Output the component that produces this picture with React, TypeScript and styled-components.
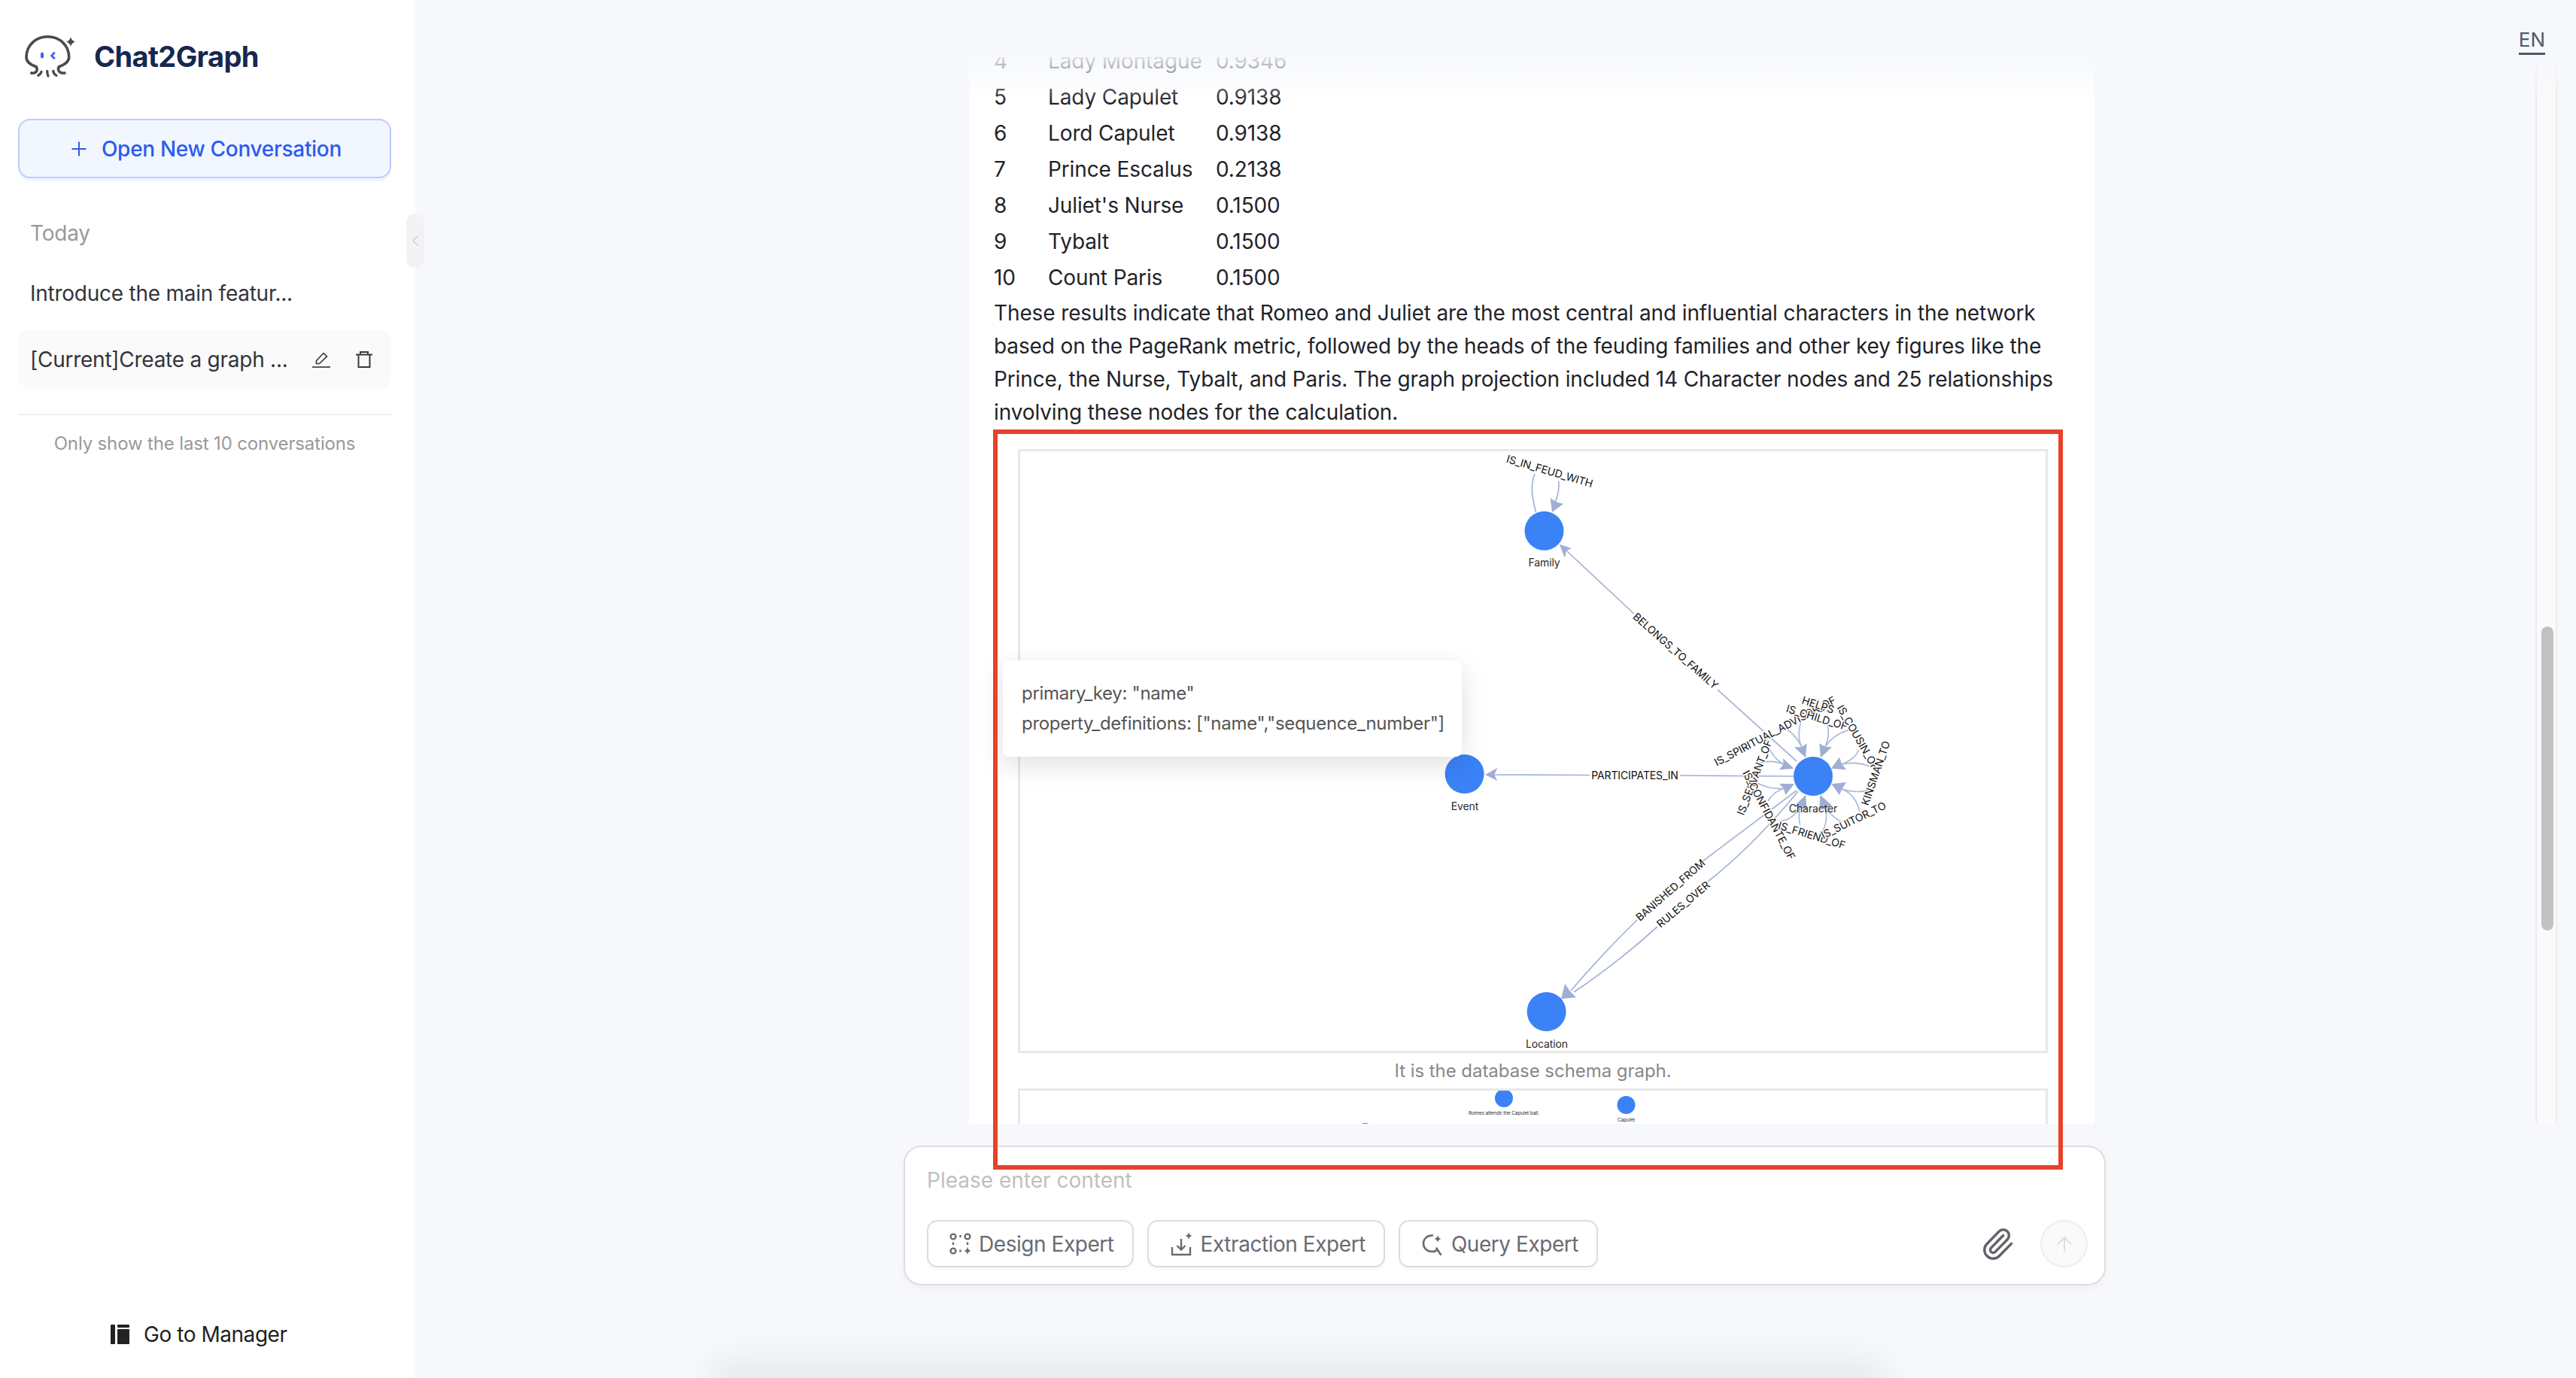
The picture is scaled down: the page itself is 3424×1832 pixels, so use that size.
import React from "react";
import styled, { createGlobalStyle } from "styled-components";
import { Plus, ChevronLeft, Paperclip, ArrowUp } from "lucide-react";

const Global = createGlobalStyle`
  html, body { margin: 0; padding: 0; background: #f6f8fc; }
  * { box-sizing: border-box; }
`;

const Page = styled.div`
  position: relative;
  display: flex;
  width: 3424px;
  height: 1832px;
  overflow: hidden;
  background: #f6f8fc;
  font-family: Inter, "Noto Sans", sans-serif;
`;

const Sidebar = styled.aside`
  position: relative;
  flex: 0 0 552px;
  display: flex;
  flex-direction: column;
  padding: 0 32px 38px 24px;
  background: #fff;
`;

const Brand = styled.div`
  display: flex;
  align-items: center;
  gap: 23px;
  height: 58px;
  margin: 46px 0 54px 6px;
`;

const BrandName = styled.span`
  font-size: 38px;
  font-weight: 700;
  color: #16284f;
  letter-spacing: -0.6px;
`;

const NewButton = styled.button`
  display: flex;
  align-items: center;
  justify-content: center;
  gap: 15px;
  width: 496px;
  height: 79px;
  border: 2px solid #bcccfb;
  border-radius: 16px;
  background: #f2f6ff;
  box-shadow: 0 4px 0 #f1f6ff;
  color: #2a5bf0;
  font: 500 28px Inter, sans-serif;
  letter-spacing: -0.3px;
`;

const SectionLabel = styled.div`
  margin: 53px 0 21px 16px;
  font-size: 28px;
  line-height: 40px;
  color: #999;
  letter-spacing: -0.2px;
`;

const Conversation = styled.div<{ $current?: boolean }>`
  display: flex;
  align-items: center;
  height: 78px;
  padding: 0 25px 0 16px;
  border-radius: 16px;
  background: ${(p) => (p.$current ? "#fafafa" : "transparent")};
  margin-bottom: 10px;
  font-size: 28px;
  letter-spacing: -0.25px;
  color: #33343a;
`;

const ConversationTitle = styled.span`
  flex: 1;
  white-space: nowrap;
`;

const ConversationActions = styled.span`
  display: flex;
  align-items: center;
  gap: 34px;
`;

const Divider = styled.hr`
  width: 100%;
  height: 2px;
  margin: 23px 0 0;
  border: 0;
  background: #f0f0f0;
`;

const Note = styled.div`
  margin-top: 22px;
  font-size: 24px;
  line-height: 32px;
  letter-spacing: -0.15px;
  text-align: center;
  color: #999;
`;

const ManagerLink = styled.div`
  display: flex;
  align-items: center;
  gap: 19px;
  height: 40px;
  margin-top: auto;
  padding-left: 123px;
  font-size: 28px;
  letter-spacing: -0.45px;
  color: #1f1f1f;
`;

const CollapseHandle = styled.div`
  position: absolute;
  left: 540px;
  top: 284px;
  display: flex;
  align-items: center;
  justify-content: center;
  width: 24px;
  height: 72px;
  border-radius: 12px;
  background: #f3f3f3;
  color: #c9c9c9;
`;

const Main = styled.main`
  position: relative;
  flex: 1;
  min-width: 0;
  display: flex;
  flex-direction: column;
`;

const TopBar = styled.header`
  display: flex;
  justify-content: flex-end;
  height: 76px;
  padding: 36px 41px 0 0;
`;

const LangSwitch = styled.span`
  height: 37px;
  border-bottom: 3px solid #505868;
  font-size: 26px;
  line-height: 33px;
  color: #505868;
`;

const ChatBody = styled.div`
  position: relative;
  display: flex;
  height: 1418px;
  overflow: hidden;
`;

const TopFade = styled.div`
  position: absolute;
  inset: 0 0 auto 0;
  height: 60px;
  background: linear-gradient(to bottom, rgba(246, 248, 252, 0.88), rgba(246, 248, 252, 0));
`;

const ChatColumn = styled.div`
  flex: 1;
  min-width: 0;
  padding-left: 736px;
`;

const MessageCard = styled.article`
  width: 1496px;
  margin-top: -19px;
  padding: 0 42px 0 33px;
  background: #fff;
  color: #1f2329;
  font-size: 28px;
  letter-spacing: -0.12px;
`;

const ResultTable = styled.table`
  border-collapse: collapse;
  td {
    height: 48px;
    padding: 0;
    white-space: nowrap;
  }
  td:nth-child(1) { width: 72px; }
  td:nth-child(2) { width: 223px; }
`;

const Paragraph = styled.p`
  margin: 1px 0 0;
  line-height: 44px;
  white-space: nowrap;
`;

const GraphFrame = styled.figure<{ $height: number }>`
  position: relative;
  width: 1369px;
  height: ${(p) => p.$height}px;
  margin: 0 0 0 32px;
  border: 3px solid #e8e8e8;
  background: #fff;
`;

const FirstFrame = styled(GraphFrame)`
  margin-top: 27px;
`;

const GraphSvg = styled.svg`
  display: block;
  width: 100%;
  height: 100%;
`;

const GraphTooltip = styled.div`
  position: absolute;
  left: -23px;
  top: 278px;
  width: 610px;
  height: 128px;
  padding: 24px 25px;
  border-radius: 8px;
  background: #fff;
  box-shadow: 0 10px 34px rgba(0, 0, 0, 0.13);
  font-size: 24px;
  line-height: 40px;
  letter-spacing: -0.3px;
  color: #555;
  white-space: nowrap;
`;

const Caption = styled.div`
  margin-left: 32px;
  width: 1369px;
  height: 47px;
  font-size: 24px;
  line-height: 47px;
  letter-spacing: -0.05px;
  text-align: center;
  color: #888;
`;

const ScrollTrack = styled.div`
  flex: 0 0 29px;
  position: relative;
  margin: 4px 25px 0 0;
  border-left: 2px solid #ececec;
  border-right: 2px solid #ececec;
  background: #fafafa;
`;

const ScrollThumb = styled.div`
  position: absolute;
  left: 6px;
  top: 753px;
  width: 16px;
  height: 404px;
  border-radius: 8px;
  background: #c1c1c1;
`;

const Composer = styled.section`
  width: 1598px;
  height: 186px;
  margin: 29px 0 0 649px;
  padding: 22px 22px 0 29px;
  border: 2px solid #dedede;
  border-radius: 24px;
  background: #fff;
  box-shadow: 0 4px 10px rgba(0, 0, 0, 0.03);
`;

const Placeholder = styled.div`
  height: 44px;
  font-size: 28px;
  line-height: 44px;
  color: #bfbfbf;
`;

const Toolbar = styled.div`
  display: flex;
  align-items: center;
  gap: 18px;
  margin-top: 31px;
`;

const ExpertButton = styled.button`
  display: flex;
  align-items: center;
  gap: 10px;
  height: 63px;
  padding: 0 24px 0 28px;
  border: 2px solid #dcdcdc;
  border-radius: 14px;
  background: #fff;
  box-shadow: 0 4px 0 #fafafa;
  color: #6a6b71;
  font: 400 28px Inter, sans-serif;
  letter-spacing: -0.45px;
  white-space: nowrap;
`;

const AttachButton = styled.span`
  display: flex;
  margin-left: auto;
  margin-right: 16px;
  color: #63646a;
`;

const SendButton = styled.span`
  display: flex;
  align-items: center;
  justify-content: center;
  width: 63px;
  height: 63px;
  border: 2px solid #eee;
  border-radius: 50%;
  background: #fafafa;
  color: #d9d9d9;
`;

const BottomGlow = styled.div`
  position: absolute;
  left: 970px;
  bottom: -12px;
  width: 1510px;
  height: 12px;
  box-shadow: 0 0 44px 22px rgba(0, 0, 0, 0.065);
`;

const Annotation = styled.div`
  position: absolute;
  left: 1320px;
  top: 571px;
  width: 1422px;
  height: 984px;
  border: 6px solid #e8412a;
  pointer-events: none;
`;

const NodeLabel = styled.text`
  font: 400 14px Inter, sans-serif;
  fill: #2a2a2a;
  text-anchor: middle;
  dominant-baseline: central;
`;

const TinyLabel = styled(NodeLabel)`
  font-size: 6.5px;
`;

const EdgeLabel = styled.text`
  font: 400 14px Inter, sans-serif;
  fill: #111;
  text-anchor: middle;
  dominant-baseline: central;
  stroke: #fff;
  stroke-width: 2.5px;
  paint-order: stroke;
`;

const StraightLabel = styled(EdgeLabel)`
  stroke: none;
`;

const Edge = styled.path`
  fill: none;
  stroke: #a3b3d6;
  stroke-width: 1.7px;
`;

const CloseUp = styled.g`
  path.curve {
    fill: none;
    stroke: #a9b8da;
    stroke-width: 5px;
  }
`;

const Logo = () => (
  <svg width="72" height="62" viewBox="0 0 72 62" fill="none">
    <path
      d="M11.7 53C17 54 21 51 18.3 44.7C10 42 5 38 5 32C5 16 18 4.7 33.3 4.7C49 4.7 61.7 16 61.7 32C61.7 38 56 42 48.3 44.7C45.5 50 50 54 56 53"
      stroke="#4a4a4f"
      strokeWidth="3.6"
      strokeLinecap="round"
    />
    <path d="M20.7 56.3C23 55 24.5 53.5 25 51.3M34 57C33 55 32.7 53 32.7 50.3M45 56.3C42.5 55 41 53 40.7 50.3" stroke="#4a4a4f" strokeWidth="3.2" strokeLinecap="round" />
    <rect x="24" y="25.5" width="4" height="8" rx="2" fill="#3f64f0" />
    <path d="M42 26.5L38.5 30L42 33.5" stroke="#3f64f0" strokeWidth="2.8" strokeLinecap="round" strokeLinejoin="round" />
    <path d="M64 5Q65 10 70 11.5Q65 13 64 18Q63 13 58 11.5Q63 10 64 5Z" fill="#4a4a4f" />
  </svg>
);

const EditIcon = () => (
  <svg width="24" height="22" viewBox="0 0 24 22" fill="none" stroke="#3a3a40" strokeWidth="1.7">
    <path d="M0 21H24" />
    <path d="M5.5 16.5V12.5L15 2.5L19.5 6.8L9.5 16.5Z" strokeLinejoin="round" />
  </svg>
);

const TrashIcon = () => (
  <svg width="22" height="22" viewBox="0 0 22 22" fill="none" stroke="#3a3a40" strokeWidth="2">
    <path d="M0 4.5H22" />
    <path d="M6 4.5V1H16V4.5" />
    <path d="M3.5 4.5V21H18.5V4.5" />
  </svg>
);

const ManagerIcon = () => (
  <svg width="25" height="26" viewBox="0 0 25 26" fill="#222">
    <rect x="0" y="0" width="6" height="26" rx="1" />
    <rect x="9" y="0" width="16" height="4" rx="1" />
    <rect x="9" y="6" width="16" height="20" rx="1" />
  </svg>
);

const DesignIcon = () => (
  <svg width="29" height="29" viewBox="0 0 29 29" fill="none" stroke="#6a6b71" strokeWidth="2.4">
    <circle cx="5" cy="5" r="3.4" />
    <circle cx="24" cy="5" r="3.4" />
    <circle cx="5" cy="24" r="3.4" />
    <path d="M14.5 3V6M5 12.5V16M24 12.5V16M14.5 22.5V25.5" />
    <path d="M24 18.5Q24.6 22.8 28.5 24Q24.6 25.2 24 29Q23.4 25.2 19.5 24Q23.4 22.8 24 18.5Z" fill="#6a6b71" stroke="none" />
  </svg>
);

const ExtractIcon = () => (
  <svg width="31" height="32" viewBox="0 0 31 32" fill="none" stroke="#6a6b71" strokeWidth="2.4">
    <path d="M3 20V30H27V20" />
    <path d="M15 9V23M9.5 18L15 23.5L20.5 18" />
    <path d="M25 0Q25.5 3.8 29.5 5Q25.5 6.2 25 10Q24.5 6.2 20.5 5Q24.5 3.8 25 0Z" fill="#6a6b71" stroke="none" />
  </svg>
);

const QueryIcon = () => (
  <svg width="30" height="30" viewBox="0 0 30 30" fill="none" stroke="#6a6b71" strokeWidth="2.6">
    <path d="M15 3.5C8 3 3 8 3 14.5C3 20.5 8 25 15 25C17.5 25 20 24 21.5 22.5M20.5 20.5L26 29" strokeLinecap="round" />
    <path d="M22 3Q22.5 7 26.5 8Q22.5 9.2 22 13Q21.5 9.2 17.5 8Q21.5 7 22 3Z" fill="#6a6b71" stroke="none" />
  </svg>
);

const Arrow = ({ d }: { d: string }) => <path d={d} fill="#a0aed4" />;

const Node = ({ x, y, r = 26 }: { x: number; y: number; r?: number }) => <circle cx={x} cy={y} r={r} fill="#3b82f6" />;

const z = (x: number, y: number) => [2200 + x / 3, 880 + y / 3];

const loopLabels: [string, number, number, number][] = [
  ["IS_SPIRITUAL_ADVISOR_OF", 477, 275, -28],
  ["IS_CHILD_OF", 645, 220, 17],
  ["HELPS", 650, 170, 18],
  ["IS_COUSIN_OF", 810, 300, 60],
  ["IS_SERVANT_OF", 395, 460, -69],
  ["IS_CONFIDANTE_OF", 455, 610, 62],
  ["IS_FRIEND_OF", 625, 690, 17],
  ["IS_SUITOR_TO", 790, 630, -26],
  ["KINSMAN_TO", 878, 443, -71],
];

const loopArrows: string[] = [
  "M600 382L555 340L585 340L605 325Z",
  "M660 382L655 325L678 338L705 340Z",
  "M702 425L735 380L745 408L762 430Z",
  "M703 487L762 480L745 507L735 530Z",
  "M658 530L705 572L680 585L655 590Z",
  "M600 530L555 575L578 580L605 590Z",
  "M555 487L495 485L512 505L520 530Z",
  "M553 425L510 385L512 408L495 430Z",
];

const loopCurves: string[] = [
  "M585 340Q560 290 520 265",
  "M585 340Q560 290 590 215",
  "M678 338Q700 290 685 245",
  "M678 338Q710 290 770 272",
  "M745 408Q800 385 812 350",
  "M745 408Q800 395 862 418",
  "M745 507Q800 525 850 512",
  "M745 507Q800 530 815 595",
  "M680 585Q710 620 745 640",
  "M680 585Q690 640 665 680",
  "M578 580Q570 620 578 650",
  "M575 580Q550 630 495 635",
  "M512 505Q460 510 400 480",
  "M512 505Q470 520 450 555",
  "M512 408Q470 390 420 402",
  "M512 408Q450 370 445 300",
];

const SchemaGraph = () => (
  <GraphSvg viewBox="1356 600 1363 797">
    <Edge d="M2041.5 681C2036 660 2034 645 2040 630" />
    <Edge d="M2071.7 639.6C2073 652 2070 660 2067 668" />
    <Arrow d="M2063 681L2060.7 662L2068 667L2078 670Z" />
    <EdgeLabel x={2060} y={626} transform="rotate(16.5 2060 626)">IS_IN_FEUD_WITH</EdgeLabel>

    <Edge d="M2082 732L2172 816M2283 917L2388 1012" />
    <Arrow d="M2072.8 723.6L2089 729L2082 732L2080 742Z" />
    <EdgeLabel x={2227.5} y={865} transform="rotate(41.4 2227.5 865)">BELONGS_TO_FAMILY</EdgeLabel>

    <Edge d="M1985 1030L2113 1030.5M2233 1031L2384 1032" />
    <Arrow d="M1974 1030L1990.5 1020.7L1986 1030L1990.5 1038Z" />
    <StraightLabel x={2173} y={1030.5}>PARTICIPATES_IN</StraightLabel>

    <Edge d="M2088 1317Q2130 1268 2176 1223M2263 1145L2388 1051" />
    <Edge d="M2092 1319Q2150 1280 2203 1232M2270 1172Q2330 1125 2390 1052" />
    <Arrow d="M2075 1328L2080 1308L2087 1318L2095 1326Z" />
    <EdgeLabel x={2220} y={1183} transform="rotate(-41 2220 1183)">BANISHED_FROM</EdgeLabel>
    <EdgeLabel x={2237} y={1202} transform="rotate(-40 2237 1202)">RULES_OVER</EdgeLabel>

    <CloseUp transform="translate(2200 880) scale(0.3333)">
      {loopCurves.map((d) => (
        <path key={d} className="curve" d={d} />
      ))}
      {loopArrows.map((d) => (
        <Arrow key={d} d={d} />
      ))}
    </CloseUp>
    {loopLabels.map(([text, x, y, angle]) => {
      const [fx, fy] = z(x, y);
      return (
        <EdgeLabel key={text} x={fx} y={fy} transform={`rotate(${angle} ${fx} ${fy})`}>
          {text}
        </EdgeLabel>
      );
    })}

    <Node x={2052.5} y={705.7} />
    <NodeLabel x={2052.5} y={747.5}>Family</NodeLabel>
    <Node x={1946.6} y={1029} />
    <NodeLabel x={1947} y={1071}>Event</NodeLabel>
    <Node x={2410} y={1032} />
    <NodeLabel x={2410} y={1074}>Character</NodeLabel>
    <Node x={2055.6} y={1345} />
    <NodeLabel x={2056} y={1387}>Location</NodeLabel>
  </GraphSvg>
);

const EventGraph = () => (
  <GraphSvg viewBox="1356 1450 1363 294">
    <Node x={1999} y={1460} r={12} />
    <TinyLabel x={1999} y={1480}>Romeo attends the Capulet ball.</TinyLabel>
    <Node x={2161.5} y={1469} r={12} />
    <TinyLabel x={2161.5} y={1489}>Capulet</TinyLabel>
    <Node x={1814.6} y={1505} r={12} />
  </GraphSvg>
);

const rows: [string, string, string][] = [
  ["4", "Lady Montague", "0.9346"],
  ["5", "Lady Capulet", "0.9138"],
  ["6", "Lord Capulet", "0.9138"],
  ["7", "Prince Escalus", "0.2138"],
  ["8", "Juliet's Nurse", "0.1500"],
  ["9", "Tybalt", "0.1500"],
  ["10", "Count Paris", "0.1500"],
];

export default function App() {
  return (
    <Page>
      <Global />
      <Sidebar>
        <Brand>
          <Logo />
          <BrandName>Chat2Graph</BrandName>
        </Brand>
        <NewButton>
          <Plus size={30} strokeWidth={1.6} />
          Open New Conversation
        </NewButton>
        <SectionLabel>Today</SectionLabel>
        <Conversation>
          <ConversationTitle>Introduce the main featur...</ConversationTitle>
        </Conversation>
        <Conversation $current>
          <ConversationTitle>[Current]Create a graph ...</ConversationTitle>
          <ConversationActions>
            <EditIcon />
            <TrashIcon />
          </ConversationActions>
        </Conversation>
        <Divider />
        <Note>Only show the last 10 conversations</Note>
        <ManagerLink>
          <ManagerIcon />
          Go to Manager
        </ManagerLink>
        <CollapseHandle>
          <ChevronLeft size={36} strokeWidth={1.2} />
        </CollapseHandle>
      </Sidebar>
      <Main>
        <TopBar>
          <LangSwitch>EN</LangSwitch>
        </TopBar>
        <ChatBody>
          <ChatColumn>
            <MessageCard>
              <ResultTable>
                <tbody>
                  {rows.map(([n, name, score]) => (
                    <tr key={n}>
                      <td>{n}</td>
                      <td>{name}</td>
                      <td>{score}</td>
                    </tr>
                  ))}
                </tbody>
              </ResultTable>
              <Paragraph>
                These results indicate that Romeo and Juliet are the most central and influential characters in the network
                <br />
                based on the PageRank metric, followed by the heads of the feuding families and other key figures like the
                <br />
                Prince, the Nurse, Tybalt, and Paris. The graph projection included 14 Character nodes and 25 relationships
                <br />
                involving these nodes for the calculation.
              </Paragraph>
              <FirstFrame $height={803}>
                <SchemaGraph />
                <GraphTooltip>
                  primary_key: "name"
                  <br />
                  property_definitions: ["name","sequence_number"]
                </GraphTooltip>
              </FirstFrame>
              <Caption>It is the database schema graph.</Caption>
              <GraphFrame $height={300}>
                <EventGraph />
              </GraphFrame>
            </MessageCard>
          </ChatColumn>
          <ScrollTrack>
            <ScrollThumb />
          </ScrollTrack>
          <TopFade />
        </ChatBody>
        <Composer>
          <Placeholder>Please enter content</Placeholder>
          <Toolbar>
            <ExpertButton>
              <DesignIcon />
              Design Expert
            </ExpertButton>
            <ExpertButton>
              <ExtractIcon />
              Extraction Expert
            </ExpertButton>
            <ExpertButton>
              <QueryIcon />
              Query Expert
            </ExpertButton>
            <AttachButton>
              <Paperclip size={46} strokeWidth={1.8} />
            </AttachButton>
            <SendButton>
              <ArrowUp size={30} strokeWidth={1.4} />
            </SendButton>
          </Toolbar>
        </Composer>
      </Main>
      <BottomGlow />
      <Annotation />
    </Page>
  );
}
